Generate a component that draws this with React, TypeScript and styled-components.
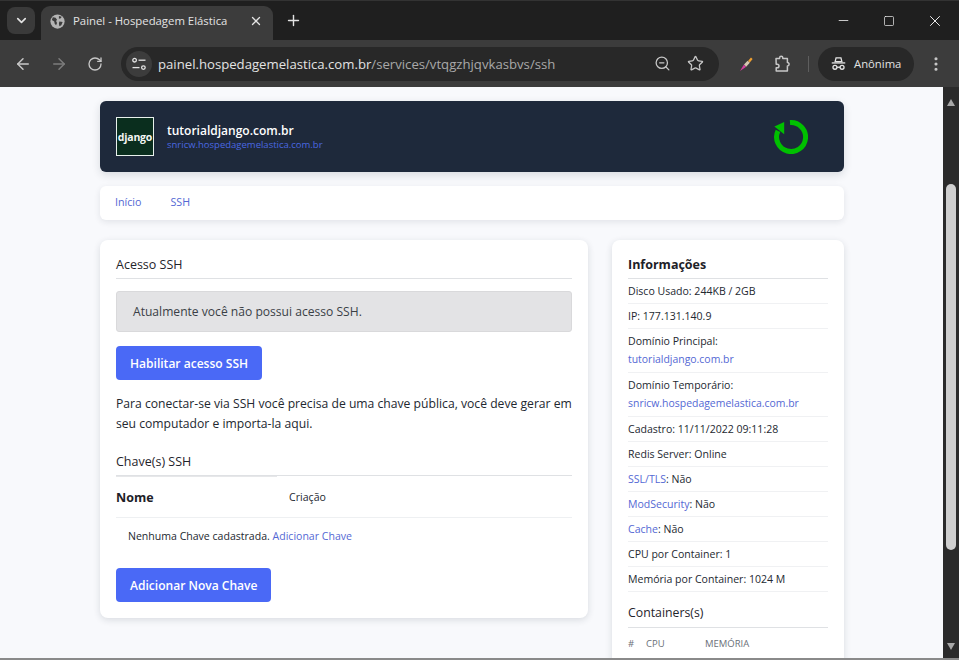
import React from "react"
import styled, { createGlobalStyle } from "styled-components"
import { ArrowLeft, ArrowRight, ChevronDown, EllipsisVertical, Minus, Plus, RotateCw, Square, Star, X, ZoomOut } from "lucide-react"

const GlobalStyle = createGlobalStyle`
  html, body {
    margin: 0;
    padding: 0;
    width: 959px;
    height: 660px;
    overflow: hidden;
    background: #1a1a1a;
  }
  * { box-sizing: border-box; }
`

const infoRows = [
  { id: "disco", text: "Disco Usado: 244KB / 2GB" },
  { id: "ip", text: "IP: 177.131.140.9" },
  { id: "principal", text: "Domínio Principal:", link: "tutorialdjango.com.br" },
  { id: "temp", text: "Domínio Temporário:", link: "snricw.hospedagemelastica.com.br" },
  { id: "cadastro", text: "Cadastro: 11/11/2022 09:11:28" },
  { id: "redis", text: "Redis Server: Online" },
  { id: "ssl", lead: "SSL/TLS", text: ": Não" },
  { id: "mod", lead: "ModSecurity", text: ": Não" },
  { id: "cache", lead: "Cache", text: ": Não" },
  { id: "cpu", text: "CPU por Container: 1" },
  { id: "mem", text: "Memória por Container: 1024 M" },
]

function GlobeIcon() {
  return (
    <svg width="15" height="15" viewBox="0 0 16 16">
      <circle cx="8" cy="8" r="7.6" fill="#b4b4b4" />
      <path d="M3 3.5l3 .5 1.5 2-1 1.5 1 2-1 2.5-1.5-1.5-.5-2.5-2.5-1.5zM9.5 2l3 1-1 1.5-2 .5zM10 8l3.5 .5-1.5 3.5-2 1-.5-3z" fill="#3c3c3c" />
    </svg>
  )
}

function SiteInfoIcon() {
  return (
    <svg width="16" height="16" viewBox="0 0 16 16" fill="none" stroke="#e3e3e3" strokeWidth="1.3">
      <circle cx="3.6" cy="4.2" r="1.8" />
      <path d="M7.5 4.2h7" />
      <circle cx="12.4" cy="11.6" r="1.8" />
      <path d="M1.5 11.6h7" />
    </svg>
  )
}

function DropperIcon() {
  return (
    <svg width="16" height="18" viewBox="0 0 16 18">
      <path d="M10 6l3-3.5 1.6 1.4-2.8 3.6z" fill="#f0a030" />
      <path d="M6 9.5l3.6-3.8 2.2 2-3.6 4z" fill="#d8c8b0" />
      <path d="M2 16l3.8-6.3 2.4 2.1z" fill="#d6409f" />
    </svg>
  )
}

function PuzzleIcon() {
  return (
    <svg width="18" height="18" viewBox="0 0 18 18" fill="none" stroke="#c7c7c7" strokeWidth="1.5" strokeLinejoin="round">
      <path d="M2 3.6h3.6V2.8a1.6 1.6 0 0 1 3.2 0v.8h4.6v4a1.5 1.5 0 0 1 0 3.4v5H2.2v-3.2h1a1.8 1.8 0 0 0 0-3.6h-1z" />
    </svg>
  )
}

function IncognitoIcon() {
  return (
    <svg width="15" height="15" viewBox="0 0 16 16" fill="none" stroke="#e3e3e3" strokeWidth="1.4">
      <path d="M4.4 6l1-4h5.2l1 4z" />
      <path d="M.8 7.4h14.4" />
      <circle cx="4.2" cy="12" r="2.1" />
      <circle cx="11.8" cy="12" r="2.1" />
      <path d="M6.3 12h3.4" />
    </svg>
  )
}

function ReloadRing() {
  return (
    <svg width="34" height="34" viewBox="0 0 34 34" fill="none">
      <path d="M16 2.6a14.5 14.5 0 1 1-12 8.2" stroke="#00c000" strokeWidth="5" />
      <path d="M10.2 2L.4 6.6l9.8 7.6z" fill="#00c000" />
    </svg>
  )
}

export default function App() {
  return (
    <Browser>
      <GlobalStyle />
      <TitleBar>
        <TabSearch>
          <ChevronDown size={15} strokeWidth={2.6} />
        </TabSearch>
        <Tab>
          <GlobeIcon />
          <TabTitle>Painel - Hospedagem Elástica</TabTitle>
          <X size={14} strokeWidth={2.2} color="#e3e3e3" />
        </Tab>
        <NewTab>
          <Plus size={17} strokeWidth={2} />
        </NewTab>
        <WindowControls>
          <WindowButton><Minus size={15} strokeWidth={1.3} /></WindowButton>
          <WindowButton><Square size={12} strokeWidth={1.4} /></WindowButton>
          <WindowButton><X size={18} strokeWidth={1.3} /></WindowButton>
        </WindowControls>
      </TitleBar>

      <Toolbar>
        <NavButton><ArrowLeft size={18} /></NavButton>
        <NavButton $muted><ArrowRight size={18} /></NavButton>
        <NavButton><RotateCw size={16} /></NavButton>
        <AddressBar>
          <SiteChip><SiteInfoIcon /></SiteChip>
          <Url>
            painel.hospedagemelastica.com.br<UrlPath>/services/vtqgzhjqvkasbvs/ssh</UrlPath>
          </Url>
          <AddressIcons>
            <ZoomOut size={17} strokeWidth={1.8} />
            <Star size={17} strokeWidth={1.8} />
          </AddressIcons>
        </AddressBar>
        <ToolIcons>
          <DropperIcon />
          <PuzzleIcon />
        </ToolIcons>
        <ToolDivider />
        <ProfilePill>
          <IncognitoIcon />
          Anônima
        </ProfilePill>
        <MenuButton><EllipsisVertical size={18} strokeWidth={2.2} /></MenuButton>
      </Toolbar>

      <Viewport>
        <Page>
          <Banner>
            <LogoBox>django</LogoBox>
            <BannerText>
              <SiteName>tutorialdjango.com.br</SiteName>
              <SiteHost>snricw.hospedagemelastica.com.br</SiteHost>
            </BannerText>
            <ReloadSlot><ReloadRing /></ReloadSlot>
          </Banner>

          <NavCard>
            <NavLink>Início</NavLink>
            <NavLink>SSH</NavLink>
          </NavCard>

          <Columns>
            <MainCard>
              <SectionTitle>Acesso SSH</SectionTitle>
              <Alert>Atualmente você não possui acesso SSH.</Alert>
              <PrimaryButton>Habilitar acesso SSH</PrimaryButton>
              <Paragraph>
                Para conectar-se via SSH você precisa de uma chave pública, você deve gerar em seu computador e importa-la aqui.
              </Paragraph>
              <SectionTitle>Chave(s) SSH</SectionTitle>
              <KeyHead>
                <KeyName>Nome</KeyName>
                <KeyDate>Criação</KeyDate>
              </KeyHead>
              <KeyEmpty>
                Nenhuma Chave cadastrada. <TextLink>Adicionar Chave</TextLink>
              </KeyEmpty>
              <PrimaryButton>Adicionar Nova Chave</PrimaryButton>
            </MainCard>

            <SideCard>
              <SideTitle>Informações</SideTitle>
              {infoRows.map((row) => (
                <InfoRow key={row.id}>
                  {row.lead && <TextLink>{row.lead}</TextLink>}
                  {row.text}
                  {row.link && <InfoLink>{row.link}</InfoLink>}
                </InfoRow>
              ))}
              <ContainersTitle>Containers(s)</ContainersTitle>
              <ContainersHead>
                <span>#</span>
                <span>CPU</span>
                <span>MEMÓRIA</span>
              </ContainersHead>
            </SideCard>
          </Columns>
        </Page>

        <Scrollbar>
          <ScrollArrow $up />
          <ScrollTrack>
            <ScrollThumb />
          </ScrollTrack>
          <ScrollArrow />
        </Scrollbar>
      </Viewport>
    </Browser>
  )
}

const Browser = styled.div`
  width: 959px;
  height: 660px;
  display: flex;
  flex-direction: column;
  overflow: hidden;
  font-family: "Open Sans", "Noto Sans", sans-serif;
  background: #1f1f1f;
`

const TitleBar = styled.div`
  height: 40px;
  flex: none;
  display: flex;
  align-items: flex-end;
  padding-left: 7px;
  background: #1f1f1f;
  border-top: 1px solid #333;
`

const TabSearch = styled.div`
  width: 28px;
  height: 27px;
  margin-bottom: 6px;
  display: flex;
  align-items: center;
  justify-content: center;
  border-radius: 8px;
  background: #3a3a3a;
  color: #e3e3e3;
`

const Tab = styled.div`
  width: 232px;
  height: 34px;
  margin-left: 6px;
  padding: 0 10px 4px 9px;
  display: flex;
  align-items: center;
  border-radius: 9px 9px 0 0;
  background: #3c3c3c;
`

const TabTitle = styled.span`
  flex: 1;
  margin-left: 8px;
  padding-bottom: 1px;
  font-size: 11.35px;
  color: #e3e3e3;
  white-space: nowrap;
`

const NewTab = styled.div`
  width: 20px;
  height: 20px;
  margin: 0 0 10px 10px;
  display: flex;
  align-items: center;
  justify-content: center;
  color: #e3e3e3;
`

const WindowControls = styled.div`
  margin-left: auto;
  height: 39px;
  padding-right: 1px;
  display: flex;
  color: #f0f0f0;
`

const WindowButton = styled.div`
  width: 46px;
  display: flex;
  align-items: center;
  justify-content: center;
`

const Toolbar = styled.div`
  height: 47px;
  flex: none;
  display: flex;
  align-items: center;
  padding-left: 5px;
  background: #3c3c3c;
`

const NavButton = styled.div<{ $muted?: boolean }>`
  width: 36px;
  display: flex;
  justify-content: center;
  color: ${(p) => (p.$muted ? "#7c7c7c" : "#c7c7c7")};
`

const AddressBar = styled.div`
  width: 598px;
  height: 34px;
  margin-left: 8px;
  padding: 0 15px 0 5px;
  display: flex;
  align-items: center;
  border-radius: 17px;
  background: #282828;
`

const SiteChip = styled.div`
  width: 26px;
  height: 26px;
  display: flex;
  align-items: center;
  justify-content: center;
  border-radius: 50%;
  background: #3c3c3c;
`

const Url = styled.div`
  flex: 1;
  margin-left: 6px;
  font-size: 13.17px;
  color: #e3e3e3;
  white-space: nowrap;
`

const UrlPath = styled.span`
  color: #a8a8a8;
`

const AddressIcons = styled.div`
  display: flex;
  gap: 16px;
  color: #c7c7c7;
`

const ToolIcons = styled.div`
  display: flex;
  align-items: center;
  gap: 20px;
  margin-left: 19px;
`

const ToolDivider = styled.div`
  width: 1px;
  height: 16px;
  margin: 0 9px 0 16px;
  background: #5e5e5e;
`

const ProfilePill = styled.div`
  width: 96px;
  height: 34px;
  display: flex;
  align-items: center;
  gap: 8px;
  padding-left: 13px;
  border-radius: 17px;
  background: #282828;
  font-size: 11.3px;
  color: #e3e3e3;
`

const MenuButton = styled.div`
  margin-left: 13px;
  display: flex;
  color: #c7c7c7;
`

const Viewport = styled.div`
  flex: 1;
  min-height: 0;
  display: flex;
  background: #f8f9fc;
  border-bottom: 2px solid #8a8a8a;
`

const Page = styled.div`
  flex: 1;
  min-width: 0;
  padding: 14px 99px 0 100px;
  overflow: hidden;
  color: #232830;
  background: #f8f9fc;
`

const Banner = styled.div`
  height: 71px;
  display: flex;
  align-items: center;
  padding: 0 36px 0 16px;
  border-radius: 6px;
  background: #1e293b;
  box-shadow: 0 3px 8px rgba(30, 41, 59, 0.14);
`

const LogoBox = styled.div`
  width: 38px;
  height: 39px;
  display: flex;
  align-items: center;
  justify-content: center;
  background: #0a2e1e;
  border: 1px solid #e8f0ec;
  font-size: 10.5px;
  font-weight: 700;
  letter-spacing: -0.2px;
  color: #f3f6f4;
`

const BannerText = styled.div`
  flex: 1;
  margin-left: 13px;
  padding-top: 2px;
`

const SiteName = styled.div`
  font-size: 12px;
  font-weight: 600;
  line-height: 14px;
  color: #fff;
`

const SiteHost = styled.div`
  font-size: 9.5px;
  line-height: 13px;
  color: #4a68e0;
`

const ReloadSlot = styled.div`
  display: flex;
`

const NavCard = styled.div`
  height: 34px;
  margin-top: 14px;
  padding: 0 0 2px 15px;
  display: flex;
  align-items: center;
  gap: 29px;
  border-radius: 6px;
  background: #fff;
  box-shadow: 0 2px 6px rgba(30, 41, 59, 0.1);
`

const NavLink = styled.a`
  font-size: 10.7px;
  font-weight: 500;
  color: #5468d4;
`

const Columns = styled.div`
  margin-top: 20px;
  display: grid;
  grid-template-columns: 488px 232px;
  gap: 24px;
  align-items: start;
`

const MainCard = styled.div`
  height: 378px;
  padding: 16px;
  border-radius: 8px;
  background: #fff;
  box-shadow: 0 2px 7px rgba(30, 41, 59, 0.14);
`

const SectionTitle = styled.div`
  height: 23px;
  font-size: 12.5px;
  font-weight: 500;
  line-height: 18px;
  color: #1f242b;
  border-bottom: 1px solid #dfe1e4;
`

const Alert = styled.div`
  height: 41px;
  margin: 12px 0 14px;
  padding-left: 16px;
  display: flex;
  align-items: center;
  border-radius: 3px;
  border: 1px solid #d9d9db;
  background: #e3e3e5;
  font-size: 12.1px;
  color: #3a3f46;
`

const PrimaryButton = styled.button`
  display: block;
  height: 34px;
  padding: 0 14px;
  border: 0;
  border-radius: 4px;
  background: #4a69f6;
  font-family: inherit;
  font-size: 12.05px;
  font-weight: 600;
  color: #fff;
`

const Paragraph = styled.p`
  margin: 14px 0 19px;
  font-size: 12.16px;
  line-height: 20px;
  color: #232830;
`

const KeyHead = styled.div`
  height: 42px;
  display: grid;
  grid-template-columns: 173px 1fr;
  align-items: center;
  border-bottom: 1px solid #eef0f2;
`

const KeyName = styled.div`
  align-self: stretch;
  width: 161px;
  display: flex;
  align-items: center;
  border-top: 1px solid #e6e7e9;
  font-size: 12.5px;
  font-weight: 700;
  color: #1d2127;
`

const KeyDate = styled.div`
  font-size: 10.6px;
  color: #232830;
`

const KeyEmpty = styled.div`
  height: 50px;
  padding: 10px 12px 0;
  font-size: 10.55px;
  line-height: 17px;
  color: #232830;
`

const TextLink = styled.a`
  color: #5468d4;
`

const SideCard = styled.div`
  height: 480px;
  padding: 16px;
  border-radius: 8px;
  background: #fff;
  box-shadow: 0 2px 7px rgba(30, 41, 59, 0.14);
`

const SideTitle = styled.div`
  height: 23px;
  font-size: 12.5px;
  font-weight: 700;
  line-height: 18px;
  color: #1d2127;
  border-bottom: 1px solid #dfe1e4;
`

const InfoRow = styled.div`
  padding: 4px 0 3px;
  font-size: 10.55px;
  line-height: 17px;
  color: #232830;
  border-bottom: 1px solid #f0f1f3;
  &:last-of-type { border-bottom: 0; }
`

const InfoLink = styled.a`
  display: block;
  margin: 1px 0;
  font-size: 10.45px;
  color: #5468d4;
`

const ContainersTitle = styled.div`
  height: 24px;
  margin-top: 12px;
  font-size: 12.3px;
  font-weight: 500;
  line-height: 18px;
  color: #1f242b;
  border-bottom: 1px solid #dfe1e4;
`

const ContainersHead = styled.div`
  margin-top: 9px;
  display: grid;
  grid-template-columns: 18px 59px 1fr;
  font-size: 9.5px;
  font-weight: 500;
  line-height: 14px;
  color: #6b7078;
`

const Scrollbar = styled.div`
  width: 16px;
  flex: none;
  display: flex;
  flex-direction: column;
  background: #2b2b2b;
`

const ScrollArrow = styled.div<{ $up?: boolean }>`
  height: 15px;
  flex: none;
  margin: ${(p) => (p.$up ? "4px" : "3px")} auto 0;
  width: 0;
  border-left: 4.5px solid transparent;
  border-right: 4.5px solid transparent;
  border-top: ${(p) => (p.$up ? "0" : "7px solid #a8a8a8")};
  border-bottom: ${(p) => (p.$up ? "7px solid #a8a8a8" : "0")};
`

const ScrollTrack = styled.div`
  flex: 1;
  padding: 79px 3px 0 3px;
  margin-top: -1px;
`

const ScrollThumb = styled.div`
  height: 366px;
  border-radius: 5px;
  background: #cfcfcf;
`
